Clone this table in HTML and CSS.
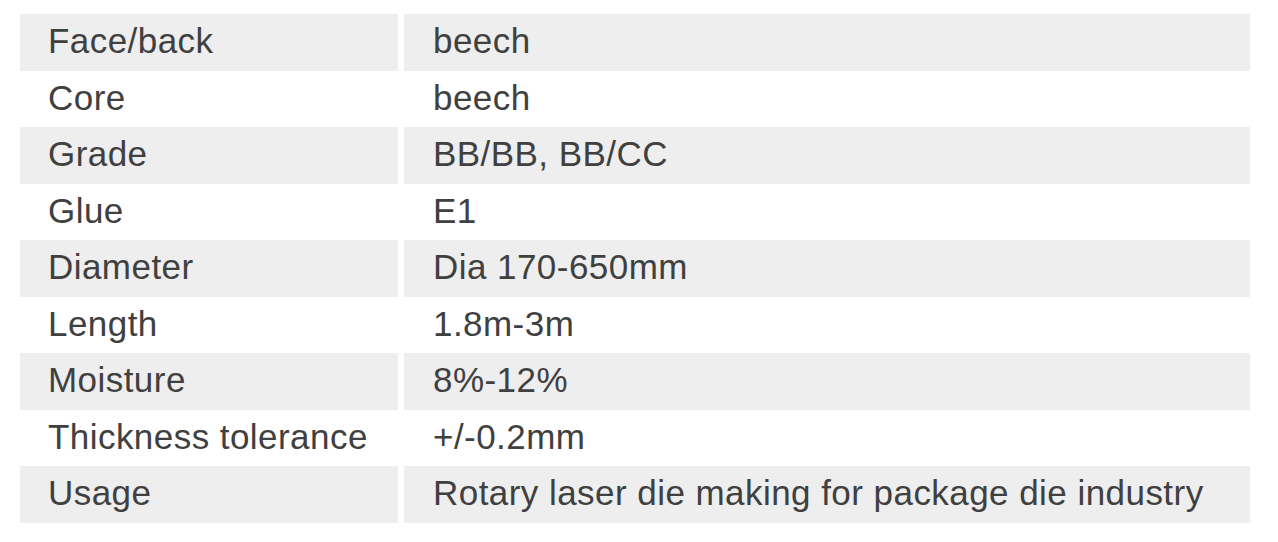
FILE: index.html
```html
<!DOCTYPE html>
<html>
<head>
<meta charset="utf-8">
<link rel="stylesheet" href="styles.css">
</head>
<body>
<div class="spec">
  <div class="row"><div class="cell key">Face/back</div><div class="cell val">beech</div></div>
  <div class="row"><div class="cell key">Core</div><div class="cell val">beech</div></div>
  <div class="row"><div class="cell key">Grade</div><div class="cell val">BB/BB, BB/CC</div></div>
  <div class="row"><div class="cell key">Glue</div><div class="cell val">E1</div></div>
  <div class="row"><div class="cell key">Diameter</div><div class="cell val">Dia 170-650mm</div></div>
  <div class="row"><div class="cell key">Length</div><div class="cell val">1.8m-3m</div></div>
  <div class="row"><div class="cell key">Moisture</div><div class="cell val">8%-12%</div></div>
  <div class="row"><div class="cell key">Thickness tolerance</div><div class="cell val">+/-0.2mm</div></div>
  <div class="row"><div class="cell key">Usage</div><div class="cell val">Rotary laser die making for package die industry</div></div>
</div>
</body>
</html>
```

FILE: styles.css
```css
html, body {
  margin: 0;
  padding: 0;
  background: #ffffff;
}
.spec {
  display: flex;
  flex-direction: column;
  width: 1230px;
  margin: 14px 0 0 20px;
  font-family: "Liberation Sans", Arial, sans-serif;
  font-size: 35px;
  letter-spacing: 0.45px;
  color: #404040;
}
.row {
  display: grid;
  grid-template-columns: 378px 846px;
  column-gap: 6px;
  height: 56.56px;
}
.cell {
  box-sizing: border-box;
  padding: 8px 0 0 28px;
  line-height: 38px;
  white-space: nowrap;
}
.val {
  padding-left: 29px;
}
.row:nth-child(odd) .cell {
  background: #eeeeee;
}
```
